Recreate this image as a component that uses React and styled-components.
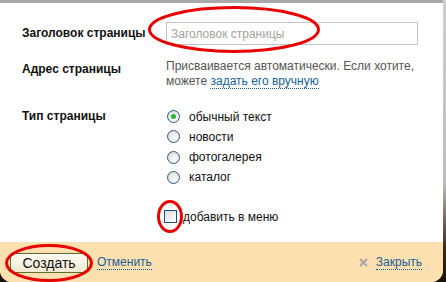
import React from "react";
import styled, { createGlobalStyle } from "styled-components";

const GlobalStyle = createGlobalStyle`
  html, body {
    margin: 0;
    padding: 0;
    width: 446px;
    height: 282px;
    overflow: hidden;
    background: #c4c4c4;
    font-family: "Liberation Sans", Arial, sans-serif;
  }
`;

const Frame = styled.div`
  width: 446px;
  height: 282px;
  display: flex;
  background: linear-gradient(#cfcfcf 0%, #bdbdbd 65%, #3a2a18 88%, #1a1208 100%);
`;

const Dialog = styled.div`
  width: 443px;
  height: 282px;
  display: flex;
  flex-direction: column;
  background: #fff;
  border-top: 3px solid #a9a9a9;
  box-sizing: border-box;
  border-radius: 0 0 12px 12px;
  overflow: hidden;
`;

const Body = styled.div`
  flex: 1;
  display: grid;
  grid-template-columns: 144px 252px;
  padding: 19px 0 0 22px;
  align-content: start;
`;

const Label = styled.div`
  font-size: 12px;
  font-weight: bold;
  color: #111;
  padding-top: ${(p) => p.$top || 0}px;
`;

const Field = styled.div`
  padding-top: ${(p) => p.$top || 0}px;
  padding-bottom: ${(p) => p.$bottom || 0}px;
`;

const Marked = styled.span`
  position: relative;
  display: inline-block;
`;

const Ellipse = styled.svg`
  position: absolute;
  pointer-events: none;
  overflow: visible;
`;

const Input = styled.input`
  width: 252px;
  height: 23px;
  box-sizing: border-box;
  border: 1px solid #c6c6c6;
  padding: 0 4px;
  font-family: "Liberation Sans", Arial, sans-serif;
  font-size: 12px;
  color: #333;
  outline: none;
  &::placeholder {
    color: #a6a39c;
  }
`;

const Hint = styled.div`
  font-size: 12px;
  line-height: 15px;
  color: #555;
`;

const Link = styled.a`
  color: #1b5f96;
  text-decoration: none;
  border-bottom: 1px dotted #1b5f96;
  font-size: 12px;
  cursor: pointer;
`;

const Options = styled.div`
  display: flex;
  flex-direction: column;
  gap: 7.3px;
  padding-left: 1px;
`;

const Option = styled.label`
  display: flex;
  align-items: center;
  gap: 9px;
  font-size: 12px;
  color: #111;
  height: 13px;
`;

const Radio = styled.span`
  width: 11px;
  height: 11px;
  border-radius: 50%;
  border: 1px solid #2f5a86;
  background: radial-gradient(circle at 60% 65%, #ffffff 0%, #e6e6e6 55%, #cfcfcf 100%);
  display: flex;
  align-items: center;
  justify-content: center;
  &::after {
    content: "";
    width: 5px;
    height: 5px;
    border-radius: 50%;
    background: ${(p) => (p.$checked ? "#2fb52f" : "transparent")};
  }
`;

const CheckRow = styled.div`
  grid-column: 1 / span 2;
  display: flex;
  align-items: center;
  gap: 6px;
  padding: 26px 0 0 142px;
  font-size: 12px;
  color: #111;
`;

const Checkbox = styled.span`
  display: block;
  width: 11px;
  height: 11px;
  border: 1px solid #1f4e7a;
  background: linear-gradient(135deg, #dcdcdc 0%, #f4f4f4 70%, #ffffff 100%);
`;

const Footer = styled.div`
  height: 40px;
  background: #fde0b0;
  display: flex;
  align-items: center;
  padding: 0 21px 0 10px;
  gap: 9px;
`;

const Button = styled.button`
  width: 78px;
  height: 20px;
  margin-top: 1px;
  border: 1px solid #5b6e2c;
  border-radius: 2px;
  background: linear-gradient(#fffdf2, #efe9d2);
  font-family: "Liberation Sans", Arial, sans-serif;
  font-size: 14px;
  color: #111;
  padding: 0;
  line-height: 18px;
`;

const Spacer = styled.div`
  flex: 1;
`;

const Close = styled.div`
  display: flex;
  align-items: center;
  gap: 8px;
`;

const RedOval = ({ w, h, left, top }) => (
  <Ellipse width={w} height={h} style={{ left, top }}>
    <ellipse
      cx={w / 2}
      cy={h / 2}
      rx={w / 2 - 1.5}
      ry={h / 2 - 1.5}
      fill="none"
      stroke="#e80000"
      strokeWidth="3"
    />
  </Ellipse>
);

const types = ["обычный текст", "новости", "фотогалерея", "каталог"];

export default function App() {
  return (
    <Frame>
      <GlobalStyle />
      <Dialog>
        <Body>
          <Label $top={4}>Заголовок страницы</Label>
          <Field $bottom={14}>
            <Marked>
              <Input placeholder="Заголовок страницы" />
              <RedOval w={172} h={47} left={-18} top={-16} />
            </Marked>
          </Field>

          <Label $top={3}>Адрес страницы</Label>
          <Field $bottom={20}>
            <Hint>
              Присваивается автоматически. Если хотите,
              <br />
              можете <Link>задать его вручную</Link>
            </Hint>
          </Field>

          <Label>Тип страницы</Label>
          <Field $top={1}>
            <Options>
              {types.map((t, i) => (
                <Option key={t}>
                  <Radio $checked={i === 0} />
                  {t}
                </Option>
              ))}
            </Options>
          </Field>

          <CheckRow>
            <Marked>
              <Checkbox />
              <RedOval w={26} h={33} left={-7} top={-10} />
            </Marked>
            добавить в меню
          </CheckRow>
        </Body>
        <Footer>
          <Marked>
            <Button>Создать</Button>
            <RedOval w={88} h={38} left={-5} top={-8} />
          </Marked>
          <Link>Отменить</Link>
          <Spacer />
          <Close>
            <svg width="9" height="9" viewBox="0 0 9 9">
              <path d="M1 1 L8 8 M8 1 L1 8" stroke="#a8a8a8" strokeWidth="2.2" />
            </svg>
            <Link>Закрыть</Link>
          </Close>
        </Footer>
      </Dialog>
    </Frame>
  );
}
